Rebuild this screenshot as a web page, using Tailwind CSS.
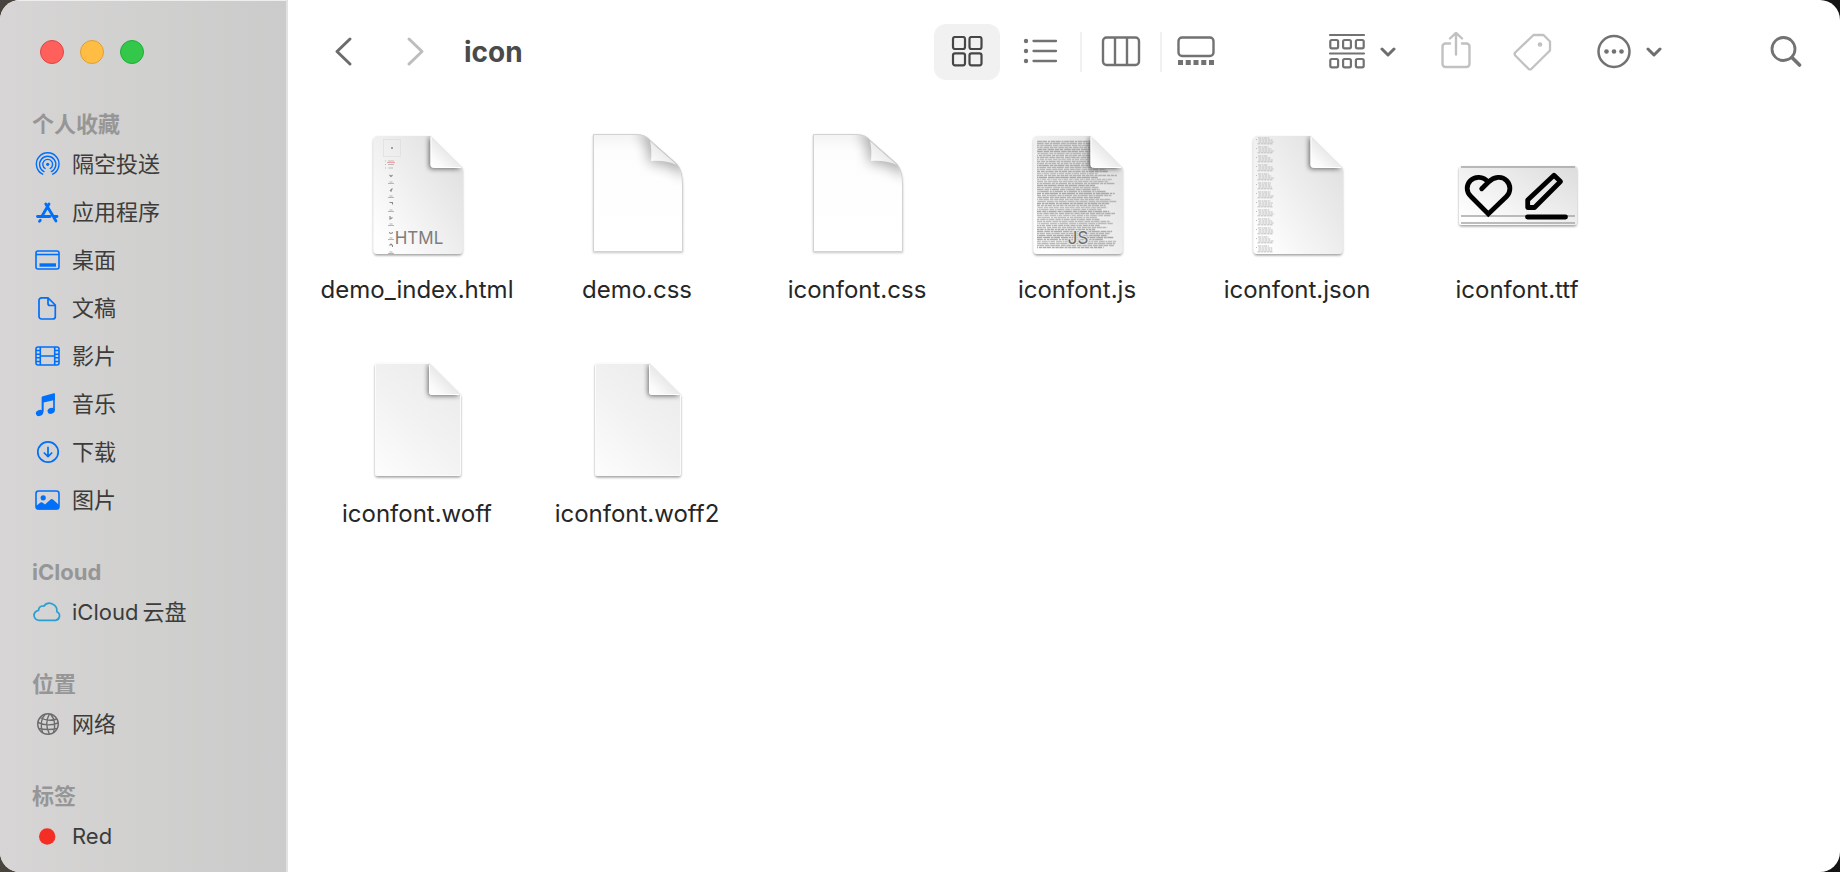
<!DOCTYPE html>
<html lang="zh-CN">
<head>
<meta charset="utf-8">
<meta name="viewport" content="width=device-width, initial-scale=1">
<title>icon</title>
<script src="https://cdn.jsdelivr.net/npm/@tailwindcss/browser@4"></script>
</head>
<body class="bg-linear-to-r from-[#4a443f] to-[#141414] font-['Inter','Noto_Sans_CJK_SC',sans-serif]">

<!-- Shared gradients and document shapes -->
<svg class="absolute size-0" aria-hidden="true">
  <defs>
    <linearGradient id="paper" x1="1" y1="0.1" x2="0.1" y2="0.9"><stop offset="0" stop-color="#dedede"/><stop offset="0.45" stop-color="#ececec"/><stop offset="1" stop-color="#fefefe"/></linearGradient>
    <linearGradient id="blank" x1="0.8" y1="0" x2="0.1" y2="1"><stop offset="0" stop-color="#ebebeb"/><stop offset="0.5" stop-color="#f2f2f2"/><stop offset="1" stop-color="#fcfcfc"/></linearGradient>
    <linearGradient id="fold" x1="0" y1="1" x2="0.5" y2="0.5"><stop offset="0" stop-color="#ffffff"/><stop offset="0.4" stop-color="#fafafa"/><stop offset="1" stop-color="#e9e9e9"/></linearGradient>
    <linearGradient id="curl" x1="0" y1="1" x2="0.5" y2="0.5"><stop offset="0" stop-color="#ffffff"/><stop offset="1" stop-color="#ebebeb"/></linearGradient>
    <linearGradient id="sheet" x1="0" y1="0" x2="0" y2="1"><stop offset="0" stop-color="#f3f3f3"/><stop offset="0.14" stop-color="#fdfdfd"/><stop offset="1" stop-color="#ffffff"/></linearGradient>
    <filter id="drop" x="-20%" y="-20%" width="140%" height="140%"><feDropShadow dx="0" dy="1.5" stdDeviation="1.3" flood-color="#000" flood-opacity="0.38"/></filter>
    <filter id="lift" x="-20%" y="-20%" width="140%" height="140%"><feDropShadow dx="0" dy="1" stdDeviation="1" flood-color="#000" flood-opacity="0.22"/></filter>
    <filter id="soft" x="-60%" y="-60%" width="220%" height="220%"><feGaussianBlur stdDeviation="2.6"/></filter>
    <filter id="softer" x="-100%" y="-100%" width="300%" height="300%"><feGaussianBlur stdDeviation="6.5"/></filter>
    <clipPath id="docClip"><path d="M24.500 6H77.500L109.500 38V120a4 4 0 0 1-4 4H24.500a4 4 0 0 1-4-4V10a4 4 0 0 1 4-4Z"/></clipPath>
    <clipPath id="blankClip"><path d="M25 9H76L108 41V119a3 3 0 0 1-3 3H25a3 3 0 0 1-3-3V12a3 3 0 0 1 3-3Z"/></clipPath>
    <clipPath id="sheetClip"><path d="M20 4H64Q73 4 78 11L104 34Q110 41 110 54V122H20Z"/></clipPath>
    <symbol id="docBase" viewBox="0 0 128 128">
      <path filter="url(#drop)" fill="url(#paper)" d="M24.500 6H77.500L109.500 38V120a4 4 0 0 1-4 4H24.500a4 4 0 0 1-4-4V10a4 4 0 0 1 4-4Z"/>
    </symbol>
    <symbol id="docFold" viewBox="0 0 128 128">
      <g clip-path="url(#docClip)"><path filter="url(#soft)" fill="#000" opacity=".55" d="M76 6V36q0 3 3 3H108Z"/></g>
      <path fill="url(#fold)" d="M77.500 6V35q0 2.500 2.500 2.500H109.500Z"/>
      <path fill="none" stroke="#fff" d="M78 7V35q0 2.500 2.500 2.500H108"/>
    </symbol>
    <symbol id="docBlank" viewBox="0 0 128 128">
      <path filter="url(#drop)" fill="url(#blank)" d="M25 9H76L108 41V119a3 3 0 0 1-3 3H25a3 3 0 0 1-3-3V12a3 3 0 0 1 3-3Z"/>
      <g clip-path="url(#blankClip)"><path filter="url(#soft)" fill="#000" opacity=".55" d="M75 9V39q0 3 3 3H107Z"/></g>
      <path fill="none" stroke="#fbfbfb" d="M25 9.500H76L107.500 41V119a2.500 2.500 0 0 1-2.500 2.500H25a2.500 2.500 0 0 1-2.500-2.500V12a2.500 2.500 0 0 1 2.500-2.500Z"/>
      <path fill="url(#fold)" d="M76 9V38q0 3 3 3H108Z"/>
      <path fill="none" stroke="#fff" d="M76.500 11V38q0 2.500 2.500 2.500H106"/>
    </symbol>
    <symbol id="docSheet" viewBox="0 0 128 128">
      <path filter="url(#lift)" fill="#fff" d="M20 4H64Q73 4 78 11L104 34Q110 41 110 54V122H20Z"/>
      <g clip-path="url(#sheetClip)">
        <rect x="20" y="4" width="90" height="118" fill="url(#sheet)"/>
        <path filter="url(#softer)" fill="#000" opacity=".32" d="M64 2Q76 10 76 33Q98 33 112 48V2Z"/>
      </g>
      <path fill="none" stroke="#d2d2d2" d="M20.500 4.500H64Q73 5 78 11L104 34Q109.500 41 109.500 54V121.500H20.500Z"/>
      <path fill="url(#curl)" d="M77 11Q79 20 78 31Q92 30 104 35Z"/>
    </symbol>
    <symbol id="chevDown" viewBox="0 0 16 10"><path fill="none" stroke="#6e6e6e" stroke-width="3" stroke-linecap="round" stroke-linejoin="round" d="M2 2L8 8L14 2"/></symbol>
  </defs>
</svg>

<div class="flex min-h-screen overflow-hidden rounded-[20px] bg-white">

  <aside class="w-72 shrink-0 border-r-2 border-[#e2e2e2] bg-linear-to-r from-[#d7d5d5] via-[#d0d0cf] to-[#cbcbcb] shadow-[inset_0_1px_0_#eeeeee]">
    <div class="flex h-[108px] gap-4 px-10 pt-10">
      <button aria-label="关闭" class="size-6 rounded-full border border-[#e0443e] bg-[#ff605c]"></button>
      <button aria-label="最小化" class="size-6 rounded-full border border-[#dea035] bg-[#ffbd44]"></button>
      <button aria-label="缩放" class="size-6 rounded-full border border-[#1fac37] bg-[#34c84a]"></button>
    </div>

    <nav class="flex flex-col gap-8 text-[22px] text-[#3c3c3c]">
      <section>
        <h2 class="h-8 px-8 leading-8 font-bold text-[#979696]">个人收藏</h2>
        <ul>
          <li><a href="#" class="flex h-12 items-center gap-2.5 px-8">
            <svg class="h-8 w-[30px]" viewBox="0 0 30 32" fill="none" stroke="#006ffa" stroke-width="1.400" stroke-linecap="round"><circle cx="15.700" cy="16.300" r="1.600" fill="#006ffa" stroke="none"/><path d="M13.200 20.500a4.900 4.900 0 1 1 5 0M12 23.600a8.100 8.100 0 1 1 7.400 0M10.700 26.200a11.300 11.300 0 1 1 10 0"/></svg>
            <span>隔空投送</span></a></li>
          <li><a href="#" class="flex h-12 items-center gap-2.5 px-8">
            <svg class="h-8 w-[30px]" viewBox="0 0 30 32" fill="none" stroke="#006ffa" stroke-width="2.800" stroke-linecap="round"><path d="M17 8L9.800 20.500M13.800 8L24 25M5.500 20.500H18M22.500 20.500H25M8.300 24.200L7.500 25.300"/></svg>
            <span>应用程序</span></a></li>
          <li><a href="#" class="flex h-12 items-center gap-2.5 px-8">
            <svg class="h-8 w-[30px]" viewBox="0 0 30 32" fill="none" stroke="#006ffa" stroke-width="1.600"><rect x="4" y="7" width="23" height="18" rx="2"/><path d="M4 10.500H27"/><path stroke-width="3.400" d="M7.500 21H24"/></svg>
            <span>桌面</span></a></li>
          <li><a href="#" class="flex h-12 items-center gap-2.5 px-8">
            <svg class="h-8 w-[30px]" viewBox="0 0 30 32" fill="none" stroke="#006ffa" stroke-width="1.700" stroke-linejoin="round"><path d="M9.500 5.800H16L23.300 13V24.500a2.500 2.500 0 0 1-2.500 2.500H9.500a2.500 2.500 0 0 1-2.500-2.500V8.300a2.500 2.500 0 0 1 2.500-2.500ZM16 6V11.500q0 2 2 2H23"/></svg>
            <span>文稿</span></a></li>
          <li><a href="#" class="flex h-12 items-center gap-2.5 px-8">
            <svg class="h-8 w-[30px]" viewBox="0 0 30 32" fill="none" stroke="#006ffa" stroke-width="1.600"><rect x="4" y="7" width="23" height="18" rx="2"/><path d="M8.300 7V25M22.700 7V25M8.300 16H22.700M4 10.500H8M4 14.200H8M4 17.800H8M4 21.500H8M23 10.500H27M23 14.200H27M23 17.800H27M23 21.500H27"/></svg>
            <span>影片</span></a></li>
          <li><a href="#" class="flex h-12 items-center gap-2.5 px-8">
            <svg class="h-8 w-[30px]" viewBox="0 0 30 32" fill="#006ffa"><path d="M10 8.500L22.700 5V12L11.500 14.500V23.500H10Z"/><path fill="none" stroke="#006ffa" stroke-width="1.700" d="M10.500 9V24.500M22 6V22"/><ellipse cx="7.500" cy="25" rx="3.700" ry="2.900" transform="rotate(-20 7.500 25)"/><ellipse cx="19.200" cy="22.800" rx="3.700" ry="2.900" transform="rotate(-20 19.200 22.800)"/></svg>
            <span>音乐</span></a></li>
          <li><a href="#" class="flex h-12 items-center gap-2.5 px-8">
            <svg class="h-8 w-[30px]" viewBox="0 0 30 32" fill="none" stroke="#006ffa" stroke-width="1.700" stroke-linecap="round" stroke-linejoin="round"><circle cx="16" cy="16" r="10.200"/><path d="M16 11.300V20.500M12.300 17L16 20.700L19.700 17"/></svg>
            <span>下载</span></a></li>
          <li><a href="#" class="flex h-12 items-center gap-2.5 px-8">
            <svg class="h-8 w-[30px]" viewBox="0 0 30 32" fill="#006ffa"><rect x="4" y="7" width="23" height="18" rx="2.500" fill="none" stroke="#006ffa" stroke-width="1.600"/><circle cx="11.200" cy="13.800" r="2.600"/><path d="M4 22L8.500 18.500q1.200-.8 2.300.2L13 20.500L18.500 15.500q1.300-1 2.500 0L27 21V24q0 1.500-1.500 1.500H5.500Q4 25.500 4 24Z"/></svg>
            <span>图片</span></a></li>
        </ul>
      </section>
      <section>
        <h2 class="h-8 px-8 leading-8 font-bold text-[#979696]">iCloud</h2>
        <ul>
          <li><a href="#" class="flex h-12 items-center gap-2.5 px-8">
            <svg class="h-8 w-[30px]" viewBox="0 0 30 32" fill="none" stroke="#2a9fd0" stroke-width="1.700" stroke-linejoin="round"><path d="M7.500 24.300H23.500a4.500 4.500 0 0 0 1.300-8.600A7.300 7.300 0 0 0 11.800 10.200A4 4 0 0 0 6.600 14.300A5 5 0 0 0 7.500 24.300Z"/></svg>
            <span class="flex gap-1"><span>iCloud</span><span>云盘</span></span></a></li>
        </ul>
      </section>
      <section>
        <h2 class="h-8 px-8 leading-8 font-bold text-[#979696]">位置</h2>
        <ul>
          <li><a href="#" class="flex h-12 items-center gap-2.5 px-8">
            <svg class="h-8 w-[30px]" viewBox="0 0 30 32" fill="none" stroke="#6c6c6c" stroke-width="1.400"><circle cx="16" cy="16" r="10.300"/><path d="M17.500 5.800Q12 15 17.500 26.200M13.500 6Q7 12 10.500 24.500M18.500 6Q25 14 21.500 24.500M8 9.500Q16 14 25 11M6 14.500Q15 19 26 15M7 20.500Q16 22.500 25 20.500"/></svg>
            <span>网络</span></a></li>
        </ul>
      </section>
      <section>
        <h2 class="h-8 px-8 leading-8 font-bold text-[#979696]">标签</h2>
        <ul>
          <li><a href="#" class="flex h-12 items-center gap-2.5 px-8">
            <svg class="h-8 w-[30px]" viewBox="0 0 30 32"><circle cx="15.200" cy="16.500" r="8.200" fill="#f42e25"/></svg>
            <span>Red</span></a></li>
        </ul>
      </section>
    </nav>
  </aside>

  <main class="min-w-0 flex-1">
    <header class="flex h-[104px] items-center pr-[38px] pl-9">
      <button aria-label="后退" class="flex h-14 w-10 items-center justify-center"><svg class="h-8 w-5" viewBox="0 0 20 32" fill="none" stroke="#6c6c6c" stroke-width="3" stroke-linecap="round" stroke-linejoin="round"><path d="M16 3L3 15.500L16 28"/></svg></button>
      <button aria-label="前进" disabled class="ml-8 flex h-14 w-10 items-center justify-center"><svg class="h-8 w-5" viewBox="0 0 20 32" fill="none" stroke="#bdbdbd" stroke-width="3" stroke-linecap="round" stroke-linejoin="round"><path d="M3 3L16 15.500L3 28"/></svg></button>
      <h1 class="ml-7 flex-1 text-[28px] leading-8 font-bold text-[#4a4a4a]">icon</h1>

      <div class="flex items-center" role="group" aria-label="显示方式">
        <button aria-label="图标" aria-pressed="true" class="flex h-14 w-[66px] items-center justify-center rounded-xl bg-[#f1f1f1]"><svg class="size-8" viewBox="0 0 32 32" fill="none" stroke="#464646" stroke-width="2.200"><rect x="2" y="1" width="12" height="12" rx="2"/><rect x="18.500" y="1" width="12" height="12" rx="2"/><rect x="2" y="17.300" width="12" height="12" rx="2"/><rect x="18.500" y="17.300" width="12" height="12" rx="2"/></svg></button>
        <button aria-label="列表" class="flex h-14 w-20 items-center justify-center"><svg class="h-8 w-9" viewBox="0 0 36 32" fill="#727272"><circle cx="4" cy="5" r="2.200"/><circle cx="4" cy="15" r="2.200"/><circle cx="4" cy="25" r="2.200"/><path stroke="#727272" stroke-width="2.300" stroke-linecap="round" d="M11.500 5H34M11.500 15H34M11.500 25H34"/></svg></button>
        <span class="h-10 w-0.5 bg-[#f0f0f0]"></span>
        <button aria-label="分栏" class="flex h-14 w-[78px] items-center justify-center"><svg class="h-8 w-10" viewBox="0 0 40 32" fill="none" stroke="#727272" stroke-width="2.400"><rect x="2" y="1.500" width="36" height="27.500" rx="3.500"/><path d="M14 1.500V29M26 1.500V29"/></svg></button>
        <span class="h-10 w-0.5 bg-[#f0f0f0]"></span>
        <button aria-label="画廊" class="flex h-14 w-[68px] items-center justify-center"><svg class="h-8 w-10" viewBox="0 0 40 32" fill="none" stroke="#727272" stroke-width="2.400"><rect x="2.500" y="1.500" width="35" height="18.500" rx="3.500"/><path stroke-width="5" stroke-dasharray="5 2.750" d="M2 26.500H38"/></svg></button>
      </div>

      <button aria-label="分组" class="ml-24 flex h-14 items-center gap-3.5"><svg class="size-10" viewBox="0 0 40 40" fill="none" stroke="#727272" stroke-width="2.200"><path stroke-linecap="round" d="M4 3H38M4 21.500H38"/><rect x="4.300" y="8" width="7.800" height="8.300" rx="1.500"/><rect x="17.100" y="8" width="7.800" height="8.300" rx="1.500"/><rect x="29.900" y="8" width="7.800" height="8.300" rx="1.500"/><rect x="4.300" y="27" width="7.800" height="8.300" rx="1.500"/><rect x="17.100" y="27" width="7.800" height="8.300" rx="1.500"/><rect x="29.900" y="27" width="7.800" height="8.300" rx="1.500"/></svg><svg class="h-2.5 w-4"><use href="#chevDown"/></svg></button>
      <button aria-label="共享" disabled class="ml-10 flex h-14 w-10 items-center justify-center"><svg class="size-10" viewBox="0 0 40 40" fill="none" stroke="#c1c1c1" stroke-width="2.400" stroke-linecap="round" stroke-linejoin="round"><path d="M14 11.500H9.500a3 3 0 0 0-3 3V32a3 3 0 0 0 3 3H30.500a3 3 0 0 0 3-3V14.500a3 3 0 0 0-3-3H26M20 22.500V1.500M14 6.500L20 .8L26 6.500"/></svg></button>
      <button aria-label="标签" disabled class="ml-9 flex h-14 w-10 items-center justify-center"><svg class="size-10" viewBox="0 0 40 40" fill="none" stroke="#c1c1c1" stroke-width="2.300" stroke-linejoin="round"><path d="M21.500 3H31.500L38 9.500V18.500L19.500 36.800q-1.500 1.200-3 0L3.200 23.500q-1.200-1.500 0-3Z"/><circle cx="28" cy="12.500" r="2.300" fill="#c1c1c1" stroke="none"/></svg></button>
      <button aria-label="更多" class="ml-11 flex h-14 items-center gap-3.5"><svg class="size-9" viewBox="0 0 36 36" fill="none" stroke="#727272" stroke-width="2.500"><circle cx="18" cy="17.500" r="15.500"/><g fill="#727272" stroke="none"><circle cx="10.500" cy="17.500" r="2.300"/><circle cx="18" cy="17.500" r="2.300"/><circle cx="25.500" cy="17.500" r="2.300"/></g></svg><svg class="h-2.5 w-4"><use href="#chevDown"/></svg></button>
      <button aria-label="搜索" class="ml-[108px] flex h-14 w-8 items-center justify-center"><svg class="size-8" viewBox="0 0 32 32" fill="none" stroke="#727272" stroke-width="2.800"><circle cx="13.500" cy="13" r="11.500"/><path stroke-width="3.600" stroke-linecap="round" d="M22 21.500L29.500 29"/></svg></button>
    </header>

    <ul class="grid grid-cols-[repeat(auto-fill,220px)] pl-[19px] text-2xl text-[#262626]">
      <li><button class="flex h-56 w-full flex-col items-center gap-4 pt-[26px]">
        <svg class="size-32" viewBox="0 0 128 128"><use href="#docBase"/>
          <rect x="30.500" y="9.500" width="17" height="17" fill="none" stroke="#dadada" stroke-width=".6"/><rect x="38" y="17" width="2" height="2" fill="#8ea6bb"/>
          <path stroke="#bbb" d="M32 31h1M35 31h6M32 34.500h1M35 34.500h6M32 38h1M35.500 38h4.500"/><path stroke="#f0a0a0" d="M34 32.500h8"/>
          <g id="glyphs" fill="none" stroke="#8b8b8b"></g>
          <use href="#docFold"/><text x="66" y="114" text-anchor="middle" font-family="Inter, sans-serif" font-size="17" fill="#7d7d7d">HTML</text></svg>
        <span class="leading-8">demo_index.html</span></button></li>
      <li><button class="flex h-56 w-full flex-col items-center gap-4 pt-[26px]"><svg class="size-32"><use href="#docSheet"/></svg><span class="leading-8">demo.css</span></button></li>
      <li><button class="flex h-56 w-full flex-col items-center gap-4 pt-[26px]"><svg class="size-32"><use href="#docSheet"/></svg><span class="leading-8">iconfont.css</span></button></li>
      <li><button class="flex h-56 w-full flex-col items-center gap-4 pt-[26px]">
        <svg class="size-32" viewBox="0 0 128 128"><use href="#docBase"/>
          <g id="code" clip-path="url(#docClip)" fill="none" stroke="#a8a8a8" stroke-width="1.300"></g>
          <use href="#docFold"/><text x="65" y="114" text-anchor="middle" font-family="Inter, sans-serif" font-size="17" fill="#6e6e6e" stroke="#e6e6e6" stroke-width="2" paint-order="stroke">JS</text></svg>
        <span class="leading-8">iconfont.js</span></button></li>
      <li><button class="flex h-56 w-full flex-col items-center gap-4 pt-[26px]">
        <svg class="size-32" viewBox="0 0 128 128"><use href="#docBase"/><g id="entries" clip-path="url(#docClip)" fill="none" stroke="#bcbcbc"></g><use href="#docFold"/></svg>
        <span class="leading-8">iconfont.json</span></button></li>
      <li><button class="flex h-56 w-full flex-col items-center gap-4 pt-[26px]">
        <svg class="size-32" viewBox="0 0 128 128" fill="none"><rect x="6" y="36" width="118" height="59" rx="3" fill="url(#paper)" filter="url(#drop)"/>
          <path stroke="#a6a6a6" stroke-width="1.600" d="M8 37H122M8 86H122M8 93H122"/>
          <g stroke="#000" stroke-width="4.800"><path stroke-linecap="round" d="M28.700 58.700L35.500 52C41 46.500 49 45.800 53.500 50.500C58 55 58 62 53.500 66.500L35.300 84L18 66.500C13 62 13 55 17.500 50.500C22 46 30 46 35.300 52"/><path stroke-linejoin="round" d="M74.700 70L101 45.300L107.500 51.500L81.500 77.500H74.700Z"/><path stroke-linecap="round" d="M74.500 87H112.500"/></g></svg>
        <span class="leading-8">iconfont.ttf</span></button></li>
      <li><button class="flex h-56 w-full flex-col items-center gap-4 pt-[26px]"><svg class="size-32"><use href="#docBlank"/></svg><span class="leading-8">iconfont.woff</span></button></li>
      <li><button class="flex h-56 w-full flex-col items-center gap-4 pt-[26px]"><svg class="size-32"><use href="#docBlank"/></svg><span class="leading-8">iconfont.woff2</span></button></li>
    </ul>
  </main>
</div>

<script>
// Fills the document previews with miniature lines of content.
const NS = 'http://www.w3.org/2000/svg';
let seed = 7;
const rnd = () => (seed = (seed * 16807) % 2147483647) / 2147483647;
function line(parent, d, attrs = {}) {
  const p = document.createElementNS(NS, 'path');
  p.setAttribute('d', d);
  for (const k in attrs) p.setAttribute(k, attrs[k]);
  document.getElementById(parent).appendChild(p);
}
const marks = ['M36.500 45l1.500 1.500l1.500-1.500', 'M37 47l2.500-2.500M37 47h2', 'M36.500 44.500h3v2', 'M37 44v3l2.500-1.500', 'M36.500 46a1.500 1.500 0 1 0 3 0', 'M36.500 45.500l1.500-1.500l1.500 1.500v1.500'];
for (let i = 0; i < 6; i++) {
  const y = i * 14;
  line('glyphs', marks[i], { transform: `translate(0 ${y})`, 'stroke-width': 1.1 });
  line('glyphs', `M35 ${y + 53.5}h6M36.500 ${y + 52}h3`, { stroke: '#b5b5b5' });
}
for (let y = 11.5; y < 119; y += 2) {
  const w = y < 38 ? 80 : 58 + rnd() * 22;
  line('code', `M24 ${y}H${24 + w}`, {
    'stroke-dasharray': `${2 + rnd() * 5} .7 ${1 + rnd() * 4} .5 ${3 + rnd() * 6} .9`,
    'stroke-dashoffset': rnd() * 12,
    opacity: 0.7 + rnd() * 0.3
  });
}
for (let y = 8; y < 124; y += 9) {
  line('entries', `M25 ${y}h${10 + rnd() * 4}M25.500 ${y + 2}h${12 + rnd() * 3}M25.500 ${y + 4}h${13 + rnd() * 3}M24.500 ${y + 5.8}h15M23.500 ${y + 1}v1`, { 'stroke-dasharray': '3 .6 2 .4' });
}
</script>
</body>
</html>
